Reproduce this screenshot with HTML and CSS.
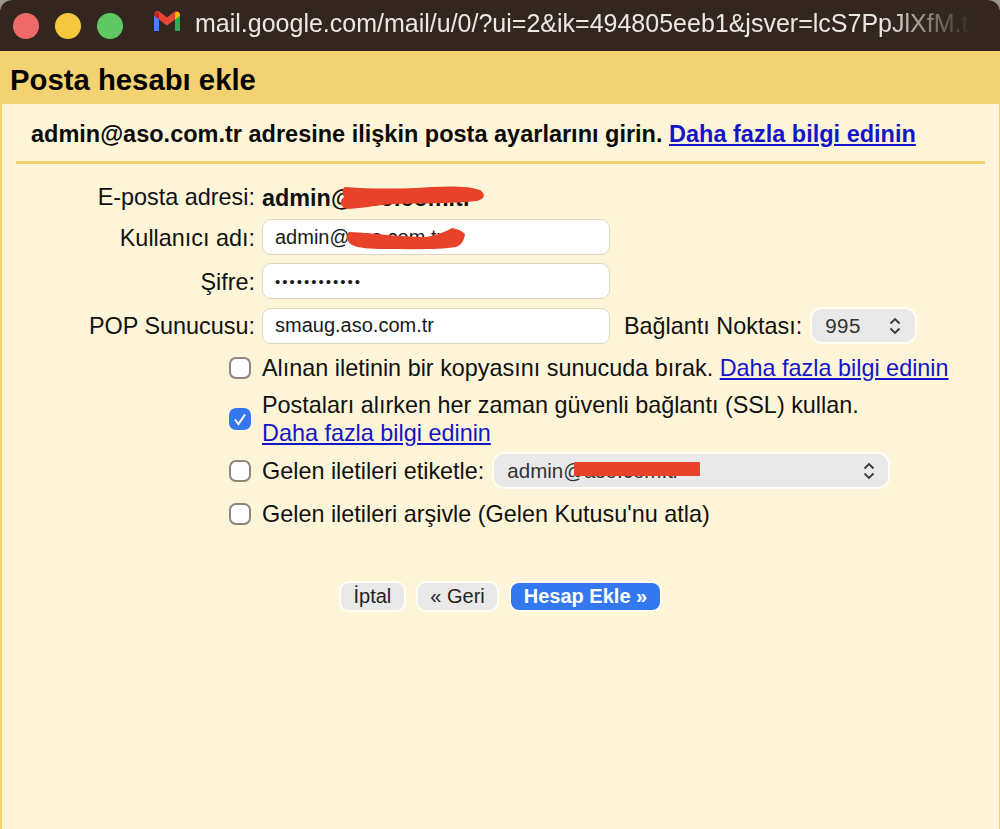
FILE: index.html
```html
<!DOCTYPE html>
<html lang="tr">
<head>
<meta charset="utf-8">
<title>Posta hesabı ekle</title>
<link rel="stylesheet" href="styles.css">
</head>
<body>
<div class="window">
  <div class="titlebar">
    <div class="lights">
      <span class="light red"></span>
      <span class="light yellow"></span>
      <span class="light green"></span>
    </div>
    <svg class="gmail" width="28" height="22" viewBox="0 0 28 22" aria-hidden="true">
      <path d="M1 5v16h5V9z" fill="#4285f4"/>
      <path d="M22 9v12h5V5z" fill="#34a853"/>
      <path d="M1 5.500C1 1.500 4.500 0 7 2l7 5.500L21 2c2.500-2 6-.5 6 3.500L22 9.500l-8 6-8-6z" fill="#ea4335"/>
      <path d="M22 3.500V9.500L27 5.800C27 2 24 .8 22 3.500z" fill="#fbbc04"/>
      <path d="M1 5.800 6 9.500V3.500C4 .8 1 2 1 5.800z" fill="#c5221f"/>
    </svg>
    <span class="url">mail.google.com/mail/u/0/?ui=2&amp;ik=494805eeb1&amp;jsver=lcS7PpJlXfM.t</span>
  </div>

  <div class="heading"><h1>Posta hesabı ekle</h1></div>

  <main class="body">
    <p class="intro">admin@aso.com.tr adresine ilişkin posta ayarlarını girin. <a href="#">Daha fazla bilgi edinin</a></p>

    <form class="form">
      <div class="fields">
        <span class="label">E-posta adresi:</span>
        <strong class="address">admin@aso.com.tr</strong>

        <label class="label" for="user">Kullanıcı adı:</label>
        <input class="field" id="user" type="text" value="admin@aso.com.tr">

        <label class="label" for="pass">Şifre:</label>
        <input class="field secret" id="pass" type="password" value="............">

        <label class="label" for="pop">POP Sunucusu:</label>
        <div class="server-row">
          <input class="field" id="pop" type="text" value="smaug.aso.com.tr">
          <label class="port-label">Bağlantı Noktası:</label>
          <div class="select port">
            <span>995</span>
            <svg width="14" height="18" viewBox="0 0 14 18" aria-hidden="true"><path d="M2.500 6.500 7 2l4.500 4.500M2.500 11.500 7 16l4.500-4.500" fill="none" stroke="#3a3a3a" stroke-width="1.800"/></svg>
          </div>
        </div>
      </div>

      <div class="options">
        <div class="option first">
          <span class="check"></span>
          <span>Alınan iletinin bir kopyasını sunucuda bırak. <a href="#">Daha fazla bilgi edinin</a></span>
        </div>
        <div class="option ssl">
          <span class="check checked">
            <svg width="22" height="22" viewBox="0 0 22 22" aria-hidden="true"><path d="M6 11.500 9.500 16 16 6.500" fill="none" stroke="#fff" stroke-width="2"/></svg>
          </span>
          <span>Postaları alırken her zaman güvenli bağlantı (SSL) kullan.<br><a href="#">Daha fazla bilgi edinin</a></span>
        </div>
        <div class="option tagged">
          <span class="check"></span>
          <span>Gelen iletileri etiketle:</span>
          <div class="select tag">
            <span>admin@aso.com.tr</span>
            <svg width="14" height="18" viewBox="0 0 14 18" aria-hidden="true"><path d="M2.500 6.500 7 2l4.500 4.500M2.500 11.500 7 16l4.500-4.500" fill="none" stroke="#3a3a3a" stroke-width="1.800"/></svg>
          </div>
        </div>
        <div class="option archive">
          <span class="check"></span>
          <span>Gelen iletileri arşivle (Gelen Kutusu'nu atla)</span>
        </div>
      </div>

      <div class="actions">
        <button class="btn" type="button">İptal</button>
        <button class="btn" type="button">« Geri</button>
        <button class="btn primary" type="button">Hesap Ekle »</button>
      </div>
    </form>
  </main>

  <svg class="scribble" width="1000" height="829" viewBox="0 0 1000 829" aria-hidden="true">
    <path d="M345 187C375 189 400 189 432 187C450 186 470 186 480 190C486 194 485 199 477 201C450 204 420 203 395 204C375 205 358 209 347 209C340 207 339 201 344 197C342 193 342 189 345 187z" fill="#e8432a"/>
    <path d="M349 232C375 233 400 237 425 237C435 236 445 232 452 228C458 229 462 231 465 234C464 240 462 245 456 247C440 250 410 249 385 249C370 249 358 248 352 245C346 241 346 235 349 232z" fill="#e8432a"/>
    <rect x="574" y="462" width="126" height="14" rx="1" fill="#e8432a"/>
  </svg>
</div>
</body>
</html>
```

FILE: styles.css
```css
* { box-sizing: border-box; }

html, body { margin: 0; height: 100%; }

body {
  background: #9a9590;
  font-family: "Liberation Sans", Arial, sans-serif;
  color: #111;
  overflow: hidden;
}

.window {
  position: relative;
  height: 829px;
  display: flex;
  flex-direction: column;
  background: #f3d272;
  border-radius: 12px 12px 0 0;
  overflow: hidden;
}

.titlebar {
  height: 51px;
  flex: none;
  display: flex;
  align-items: center;
  padding: 0 0 0 13px;
  background: #32261f;
}

.lights { display: flex; gap: 16px; }

.light { width: 26px; height: 26px; border-radius: 50%; }
.red { background: #ee6a68; }
.yellow { background: #f5c93f; }
.green { background: #60c765; }

.gmail { margin: 0 14px 0 30px; flex: none; position: relative; top: -5px; }

.url {
  font-size: 25px;
  white-space: nowrap;
  color: #ece7e3;
  width: 777px;
  overflow: hidden;
  position: relative;
  top: -2px;
  -webkit-mask-image: linear-gradient(to right, #000 690px, transparent 777px);
  mask-image: linear-gradient(to right, #000 690px, transparent 777px);
}

.heading {
  height: 53px;
  flex: none;
  display: flex;
  align-items: center;
  padding-left: 10px;
  background: #f3d272;
}

h1 { margin: 0; font-size: 29.300px; font-weight: 700; color: #050505; position: relative; top: 2px; }

.body {
  flex: 1;
  margin-left: 2px;
  margin-right: 1px;
  padding: 0 14px;
  background: #fef5d8;
  font-size: 23.400px;
}

.intro {
  margin: 0;
  height: 60px;
  padding: 17px 0 0 15px;
  font-size: 23.500px;
  line-height: 26px;
  font-weight: 700;
  border-bottom: 3px solid #f3d272;
  color: #0b0b0b;
  white-space: nowrap;
}

a { color: #1414c8; }

.fields {
  display: grid;
  grid-template-columns: 239px 1fr;
  column-gap: 7px;
  row-gap: 8px;
  align-items: center;
  margin-top: 18px;
}

.label { text-align: right; white-space: nowrap; padding-top: 2px; }

.address { height: 28px; line-height: 31px; }

.field {
  width: 348px;
  height: 36px;
  padding: 0 12px;
  border: 1px solid #ded8bf;
  border-radius: 9px;
  background: #fff;
  font: 20px "Liberation Sans", Arial, sans-serif;
  color: #1a1a1a;
}

.secret { font-size: 15px; letter-spacing: 2px; }

.server-row { display: flex; align-items: center; }

.port-label { margin-left: 14px; white-space: nowrap; padding-top: 2px; }

.select {
  display: flex;
  align-items: center;
  justify-content: space-between;
  background: #e9e9e9;
  border: 2px solid #fffdf5;
  border-radius: 12px;
  color: #333;
  font-size: 20.500px;
}

.port { width: 107px; height: 37px; margin-left: 8px; padding: 0 13px; letter-spacing: 0.500px; }

.tag { width: 398px; height: 37px; margin-left: -3px; padding: 0 12px 0 13px; }

.options { margin-left: 213px; margin-top: 10px; }

.option {
  display: flex;
  align-items: center;
  gap: 11px;
  line-height: 28px;
  white-space: nowrap;
}

.ssl { margin-top: 9px; }
.tagged { margin-top: 5px; height: 37px; }
.archive { margin-top: 11px; }

.check {
  flex: none;
  width: 22px;
  height: 22px;
  border: 2.500px solid #8a877e;
  border-radius: 7px;
  background: #fff;
}

.check.checked {
  border: 0;
  background: #3478f0;
}

.check svg { display: block; }

.actions {
  display: flex;
  gap: 10px;
  margin-top: 53px;
  margin-left: 323px;
}

.btn {
  height: 31px;
  padding: 0 12.500px;
  border: 2px solid #fffdf5;
  border-radius: 10px;
  background: #e9e9e9;
  color: #222;
  font: 20px "Liberation Sans", Arial, sans-serif;
}

.btn.primary {
  background: #3478f0;
  color: #fff;
  font-weight: 700;
  border-color: #fffdf5;
}

.scribble { position: absolute; left: 0; top: 0; pointer-events: none; }
```
